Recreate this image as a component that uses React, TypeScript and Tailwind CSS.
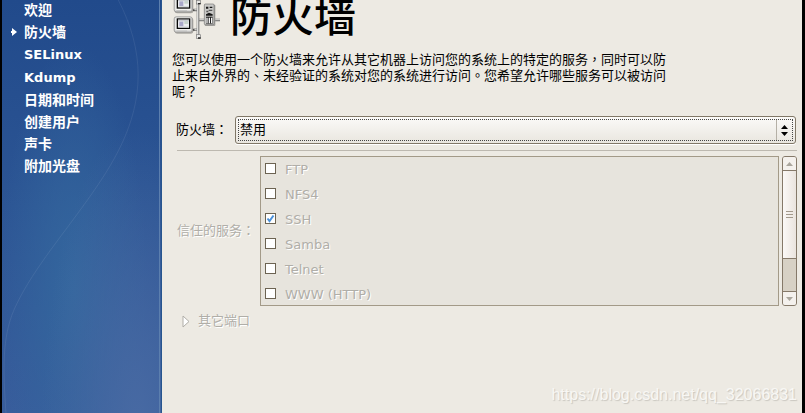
import { useState } from "react";
import clsx from "clsx";

const steps = [
  { label: "欢迎" },
  { label: "防火墙", current: true },
  { label: "SELinux", latin: true },
  { label: "Kdump", latin: true },
  { label: "日期和时间" },
  { label: "创建用户" },
  { label: "声卡" },
  { label: "附加光盘" },
];

const services = [
  { name: "FTP", trusted: false },
  { name: "NFS4", trusted: false },
  { name: "SSH", trusted: true },
  { name: "Samba", trusted: false },
  { name: "Telnet", trusted: false },
  { name: "WWW (HTTP)", trusted: false },
];

function Sidebar() {
  return (
    <nav
      aria-label="设置步骤"
      className="relative w-40 shrink-0 overflow-hidden border-r border-[#27558f] bg-[radial-gradient(ellipse_at_85%_105%,#486aa3_0%,transparent_50%),radial-gradient(ellipse_at_45%_70%,#34679e_0%,transparent_60%),linear-gradient(to_bottom,#214a8b,#2c5594_50%,#385d9c)]"
    >
      <svg
        className="absolute inset-0 h-full w-full"
        viewBox="2 0 160 413"
        preserveAspectRatio="none"
        fill="none"
        aria-hidden
      >
        <path
          d="M119 0C132 25 139 50 139 75C139 125 113 165 88 200C60 239 30 274 14 310C2 338 3 370 6 413"
          stroke="#fff"
          strokeOpacity=".08"
        />
        <path d="M160.500 0V413" stroke="#5c7fae" />
      </svg>
      <ul className="relative -mt-px">
        {steps.map((step) => (
          <li
            key={step.label}
            aria-current={step.current ? "step" : undefined}
            className={clsx(
              "flex items-center pl-2 font-bold text-white",
              step.latin ? "text-[13px] leading-[23px]" : "text-[14px] leading-[22px]"
            )}
          >
            <span className="flex w-3.5 shrink-0 pl-px">
              {step.current && (
                <svg width="6" height="8" viewBox="0 0 6 8" fill="#fff" aria-hidden>
                  <path d="M1 0L6 4L1 8V5H0V3H1Z" />
                </svg>
              )}
            </span>
            {step.label}
          </li>
        ))}
      </ul>
    </nav>
  );
}

function Monitor({ y }: { y: number }) {
  return (
    <g transform={`translate(0 ${y})`}>
      <rect x="29" y="3" width="56" height="48" rx="7" fill="#aaa8a3" />
      <rect x="27.500" y=".5" width="54" height="46" rx="6" fill="#d9d9d7" stroke="#858585" strokeWidth="2" />
      <rect x="31" y="3" width="47" height="38" rx="3" fill="#f2f2f0" />
      <rect x="37" y="7" width="37" height="28" fill="#eceef0" stroke="#080808" strokeWidth="4" />
      <path d="M39 9H72V14H39Z" fill="#c8cbd2" />
      <rect x="43" y="15" width="12" height="14" fill="#a9a8c9" />
      <rect x="58" y="13" width="12" height="9" fill="#c6d3cd" />
      <path d="M43 31H72" stroke="#cfd3d6" strokeWidth="3" />
      <path d="M34 43H66" stroke="#b5b5b5" strokeWidth="2" />
    </g>
  );
}

function NetworkIcon() {
  return (
    <svg width="55" height="40" viewBox="0 0 165 120" className="shrink-0" aria-hidden>
      <path d="M82 30H99M82 89H99M102 60H118M148 60H165" stroke="#777" strokeWidth="7" />
      <path d="M82 29H99M82 88H99M102 59H118M148 59H165" stroke="#dcdcda" strokeWidth="3" />
      <path d="M99 8V108" stroke="#777" strokeWidth="8" />
      <path d="M98 8V108" stroke="#dededc" strokeWidth="4" />
      <rect x="94" y="1" width="12" height="11" fill="#e8e8e6" stroke="#777" strokeWidth="2" />
      <rect x="94" y="104" width="12" height="11" fill="#e8e8e6" stroke="#777" strokeWidth="2" />
      <path d="M99 9H107V13H99ZM99 112H107V116H99ZM82 28H88V33H82ZM82 87H88V92H82Z" fill="#222" />
      <Monitor y={-11} />
      <Monitor y={50} />
      <rect x="119" y="14" width="32" height="64" rx="3" fill="#a09f9b" />
      <rect x="118" y="12" width="29" height="62" rx="3" fill="#c9c9c7" stroke="#777" strokeWidth="2" />
      <path d="M123 20H130V26H123ZM134 20H142V24H134ZM123 43L132 38L143 43V47H123Z" fill="#161616" />
      <path d="M131 29H142V33H131ZM124 32H130V37H124Z" fill="#555" />
      <path d="M123 50H143V71H123Z" fill="#222" />
      <path d="M126 53V70M133 53V70M140 53V70" stroke="#f6f6f6" strokeWidth="4" />
    </svg>
  );
}

function ModeSelect() {
  const [mode, setMode] = useState("disabled");

  return (
    <div className="relative flex-1">
      <select
        id="firewall-mode"
        value={mode}
        onChange={(e) => setMode(e.target.value)}
        className="block h-7 w-full appearance-none rounded-[3px] border border-[#807767] bg-linear-to-b from-[#fbfaf8] to-[#e9e6df] pl-1 text-[13px] text-black shadow-[0_1px_0_#fff] outline-1 -outline-offset-4 outline-dotted outline-[#444]"
      >
        <option value="disabled">禁用</option>
        <option value="enabled">启用</option>
      </select>
      <div className="pointer-events-none absolute inset-y-1 right-1 flex w-4 items-center justify-center border-l border-[#b5b0a6]">
        <svg width="7" height="11" viewBox="0 0 7 11" aria-hidden>
          <path d="M3.500 0L7 4H0ZM3.500 11L0 7H7Z" />
        </svg>
      </div>
    </div>
  );
}

function ServiceList() {
  return (
    <ul className="h-[150px] flex-1 overflow-hidden border border-[#a39a88] bg-[#e7e4dd]">
      {services.map((service) => (
        <li key={service.name} className="h-[25px]">
          <label className="flex h-6 items-start gap-2 pl-1 text-[#b0aea8] [text-shadow:1px_1px_0_#fff]">
            <span className="grid w-3 pt-1.5">
              <input
                type="checkbox"
                disabled
                defaultChecked={service.trusted}
                className="peer col-start-1 row-start-1 size-[11px] appearance-none border border-[#6c6352] bg-white"
              />
              <svg
                width="11"
                height="11"
                viewBox="0 0 11 11"
                fill="none"
                stroke="#4a90d9"
                strokeWidth="2"
                className="invisible z-10 col-start-1 row-start-1 peer-checked:visible"
                aria-hidden
              >
                <path d="M2.500 5.500L4.500 8L8.500 2.500" />
              </svg>
            </span>
            <span className="leading-[25px]">{service.name}</span>
          </label>
        </li>
      ))}
    </ul>
  );
}

function Scrollbar() {
  return (
    <div className="flex h-[150px] w-[15px] flex-col overflow-hidden rounded-[3px] border border-[#857969] bg-[#d7d1c5]">
      <button type="button" aria-label="向上滚动" className="flex h-3.5 items-center justify-center border-b border-[#857969] bg-[#f4f1ed]">
        <svg width="7" height="4" viewBox="0 0 7 4" fill="#aaa69d" aria-hidden>
          <path d="M0 4L3.500 0L7 4Z" />
        </svg>
      </button>
      <div className="flex h-[88px] flex-col items-center justify-center gap-0.5 border-b border-[#857969] bg-linear-to-r from-[#fbf9f7] to-[#eae4de]">
        <span className="h-px w-[7px] bg-[#a39a8c]" />
        <span className="h-px w-[7px] bg-[#a39a8c]" />
        <span className="h-px w-[7px] bg-[#a39a8c]" />
      </div>
      <button type="button" aria-label="向下滚动" className="mt-auto flex h-3.5 items-center justify-center border-t border-[#857969] bg-[#f4f1ed]">
        <svg width="7" height="4" viewBox="0 0 7 4" fill="#aaa69d" aria-hidden>
          <path d="M0 0H7L3.500 4Z" />
        </svg>
      </button>
    </div>
  );
}

export default function App() {
  return (
    <div className="relative flex min-h-screen overflow-hidden bg-black pr-[3px] pl-0.5 font-['DejaVu_Sans','Noto_Sans_CJK_TC',sans-serif] text-[13px] leading-4 text-black">
      <Sidebar />

      <main className="min-w-0 flex-1 bg-[#edeae3] pr-[5px] pl-[3px]">
        <header className="flex h-[52px] items-start gap-2.5">
          <NetworkIcon />
          <h1 className="text-[42px] leading-9 font-medium">防火墙</h1>
        </header>

        <p className="max-w-[512px] pl-[7px]">
          您可以使用一个防火墙来允许从其它机器上访问您的系统上的特定的服务，同时可以防止来自外界的、未经验证的系统对您的系统进行访问。您希望允许哪些服务可以被访问呢？
        </p>

        <div className="mt-4 mr-px flex items-center gap-[7px] pl-[11px]">
          <label htmlFor="firewall-mode" className="w-[52px] shrink-0 whitespace-nowrap">
            防火墙：
          </label>
          <ModeSelect />
        </div>

        <hr className="mt-1.5 ml-3 border-[#bdb9b0]" />

        <section className="mt-[5px] flex items-center pl-3" aria-labelledby="trusted-services">
          <h2
            id="trusted-services"
            className="w-[83px] shrink-0 text-[#b0aea8] [text-shadow:1px_1px_0_#fff]"
          >
            信任的服务：
          </h2>
          <ServiceList />
          <div className="ml-[3px]">
            <Scrollbar />
          </div>
        </section>

        <button
          type="button"
          disabled
          className="mt-[7px] flex items-center gap-2 pl-[17px] text-[#b0aea8] [text-shadow:1px_1px_0_#fff]"
        >
          <svg width="8" height="13" viewBox="0 0 8 13" fill="#fff" stroke="#b0aea8" aria-hidden>
            <path d="M1 1L7 6.500L1 12Z" />
          </svg>
          其它端口
        </button>
      </main>

      <p className="absolute right-2 bottom-2 font-['Liberation_Sans',sans-serif] text-[16px] leading-5 text-[#f8f7f4] [text-shadow:1px_1px_1px_#c9c6bf]">
        https://blog.csdn.net/qq_32066831
      </p>
    </div>
  );
}
